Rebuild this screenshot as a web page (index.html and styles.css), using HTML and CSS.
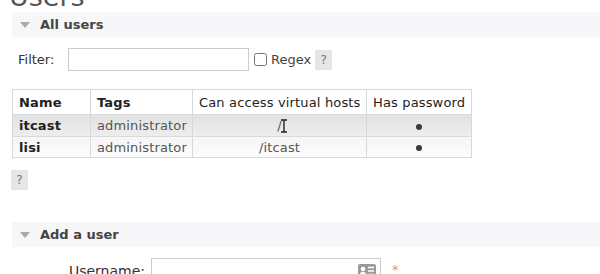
FILE: index.html
```html
<!DOCTYPE html>
<html lang="en">
<head>
    <meta charset="UTF-8">
    <meta name="viewport" content="width=device-width, initial-scale=1.0">
    <title>Users</title>
    <link rel="stylesheet" href="styles.css">
</head>
<body>
    <h1>Users</h1>

    <div class="section">
        <h2><span class="arrow"></span>All users</h2>
        <div class="filter-row">
            <label class="filter-label">Filter:</label>
            <input type="text" class="filter-input">
            <input type="checkbox" id="regex" class="regex-box">
            <label for="regex" class="regex-label">Regex</label>
            <span class="help">?</span>
        </div>

        <table class="list">
            <colgroup>
                <col class="c-name">
                <col class="c-tags">
                <col class="c-vhosts">
                <col class="c-pass">
            </colgroup>
            <thead>
                <tr>
                    <th class="left bold">Name</th>
                    <th class="left bold">Tags</th>
                    <th>Can access virtual hosts</th>
                    <th>Has password</th>
                </tr>
            </thead>
            <tbody>
                <tr class="alt1">
                    <td class="name">itcast</td>
                    <td class="tags">administrator</td>
                    <td class="center vhost-cell">/<span class="ibeam"><svg width="10" height="14" viewBox="0 0 10 14"><path d="M2 1h6M5 1v12M2 13h6" stroke="#222" stroke-width="1.4" fill="none"/></svg></span></td>
                    <td class="center"><span class="dot"></span></td>
                </tr>
                <tr class="alt2">
                    <td class="name">lisi</td>
                    <td class="tags">administrator</td>
                    <td class="center">/itcast</td>
                    <td class="center"><span class="dot"></span></td>
                </tr>
            </tbody>
        </table>

        <span class="help help-block">?</span>
    </div>

    <div class="section add-section">
        <h2><span class="arrow"></span>Add a user</h2>
        <div class="form-row">
            <label class="form-label">Username:</label>
            <div class="input-wrap">
                <input type="text" class="form-input">
                <svg class="card-icon" width="18" height="14" viewBox="0 0 18 14">
                    <rect x="0" y="0" width="18" height="14" rx="2" fill="#9a9a9a"/>
                    <circle cx="5" cy="5" r="2.3" fill="#fff"/>
                    <path d="M1.5 12c0-3 1.6-4.2 3.5-4.2s3.5 1.2 3.5 4.2z" fill="#fff"/>
                    <path d="M10 3.5h6M10 7h6M10 10.5h6" stroke="#fff" stroke-width="1.6"/>
                </svg>
            </div>
            <span class="mand">*</span>
        </div>
    </div>
</body>
</html>
```

FILE: styles.css
```css
body {
    font-family: "DejaVu Sans", Verdana, sans-serif;
    font-size: 13px;
    color: #333;
    background: #fff;
    margin: 0;
    padding: 0;
    overflow: hidden;
}
h1 {
    font-size: 27px;
    font-weight: normal;
    line-height: 27px;
    color: #555;
    margin: -17px 0 0 9px;
    height: 29px;
}
.section {
    margin-left: 12px;
}
.section h2 {
    display: flex;
    align-items: center;
    height: 25px;
    margin: 0;
    padding-left: 8px;
    background: #f7f6f8;
    font-size: 13px;
    font-weight: bold;
    color: #444;
}
.arrow {
    width: 0;
    height: 0;
    border-left: 5px solid transparent;
    border-right: 5px solid transparent;
    border-top: 6px solid #aaa;
    margin-right: 10px;
}
.filter-row {
    display: flex;
    align-items: center;
    margin-top: 11px;
    height: 23px;
}
.filter-label {
    margin-left: 6px;
    width: 50px;
    color: #333;
}
.filter-input {
    width: 181px;
    height: 23px;
    box-sizing: border-box;
    border: 1px solid #ccc;
    margin: 0;
    padding: 2px 4px;
}
.regex-box {
    width: 13px;
    height: 13px;
    margin: 0 4px 0 5px;
}
.regex-label {
    color: #444;
    margin-right: 4px;
}
.help {
    display: inline-block;
    width: 17px;
    height: 20px;
    line-height: 20px;
    text-align: center;
    background: #e6e6e6;
    color: #777;
    font-size: 12px;
}
table.list {
    border-collapse: collapse;
    table-layout: fixed;
    width: 459px;
    margin-top: 18px;
    letter-spacing: 0.15px;
}
.c-name { width: 78px; }
.c-tags { width: 102px; }
.c-vhosts { width: 174px; }
.c-pass { width: 105px; }
table.list th, table.list td {
    border: 1px solid #d8d8d8;
    padding: 0 6px;
    white-space: nowrap;
}
table.list th {
    height: 24px;
    font-weight: normal;
    color: #222;
    text-align: center;
}
table.list th.left {
    text-align: left;
}
table.list th.bold {
    font-weight: bold;
}
table.list td {
    height: 21px;
    color: #555;
}
tr.alt1 td {
    background: linear-gradient(#e2e2e2, #eeeeee);
}
tr.alt2 td {
    background: linear-gradient(#f5f5f5, #fdfdfd);
    height: 20px;
}
td.name {
    font-weight: bold;
    color: #222 !important;
}
td.center {
    text-align: center;
}
.vhost-cell {
    position: relative;
}
.ibeam {
    position: absolute;
    left: 86px;
    top: 4px;
}
.dot {
    display: inline-block;
    width: 6px;
    height: 6px;
    border-radius: 50%;
    background: #3a3a3a;
    vertical-align: middle;
}
.help-block {
    display: block;
    margin: 12px 0 0 -1px;
    height: 20px;
}
.add-section {
    margin-top: 32px;
}
.form-row {
    display: flex;
    align-items: flex-start;
    margin-top: 11px;
}
.form-label {
    width: 133px;
    text-align: right;
    padding-top: 5px;
    font-size: 14px;
    color: #333;
}
.input-wrap {
    position: relative;
    margin-left: 6px;
}
.form-input {
    width: 230px;
    height: 24px;
    box-sizing: border-box;
    border: 1px solid #ccc;
    margin: 0;
}
.card-icon {
    position: absolute;
    left: 207px;
    top: 6px;
}
.mand {
    color: #f08a8a;
    margin-left: 11px;
    padding-top: 4px;
}
```
